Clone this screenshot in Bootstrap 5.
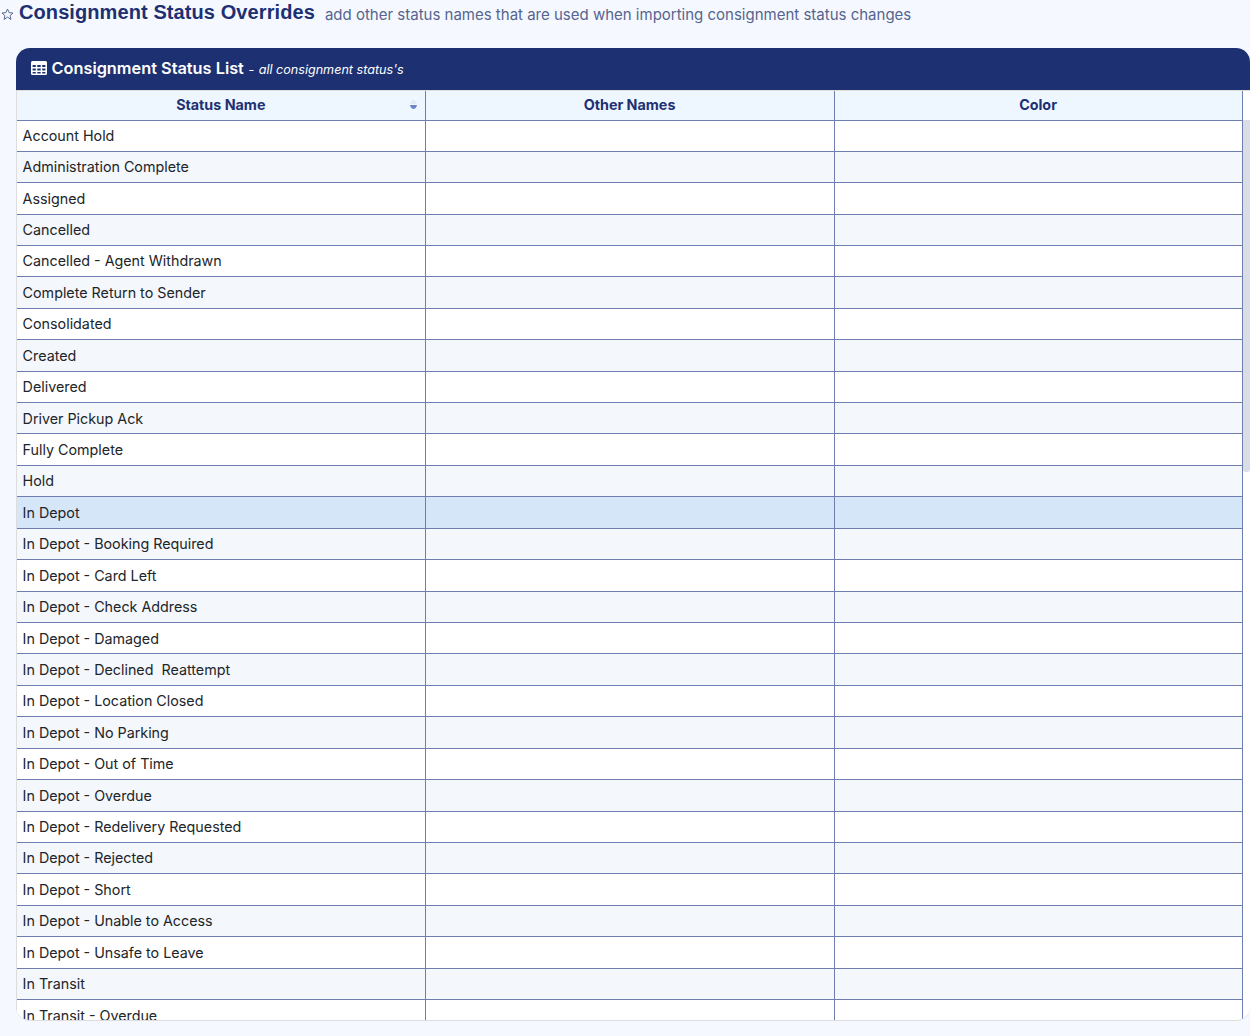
<!DOCTYPE html>
<html lang="en">
<head>
<meta charset="utf-8">
<title>Consignment Status Overrides</title>
<link rel="stylesheet" href="https://cdn.jsdelivr.net/npm/bootstrap@5.3.0/dist/css/bootstrap.min.css">
<style>
html,body{height:100%;overflow:hidden}
body{background:#f5f9ff;font-family:Inter,"Liberation Sans",sans-serif;color:#212529}
.page-head{height:48px;align-items:flex-start;gap:4px;padding-left:1px}
.page-head svg{margin-top:8px;flex:none;margin-right:1px}
.page-title{font:700 20px/24px "Liberation Sans",Arial,sans-serif;color:#1d3072;margin:0;letter-spacing:.09px}
.page-sub{font-size:15px;line-height:30px;color:#56648f;margin-left:6px}
.panel{margin-left:16px;height:973px;position:relative;border-radius:14px;overflow:hidden;background:#fff;border-bottom:1px solid #ddd}
.panel-head{height:43px;background:#1d3072;color:#fff;padding-left:15px;padding-bottom:2px;gap:4.5px;border-bottom:1px solid #ddd}
.panel-head b{font-weight:600;font-size:16.32px}
.panel-head em{font-size:12.6px}
.panel-dash{font-size:12.6px}
.tbl-wrap{height:930px;overflow:hidden;width:1227px;border-left:1px solid #ddd}
.st-table{table-layout:fixed;border-collapse:collapse;width:1226px;margin:0;font-size:14.3px}
.st-table th,.st-table td{border:0 solid #6f7db0;border-right-width:1px;border-bottom-width:1px;padding:0 6px 0 5.6px;height:31.425px;vertical-align:middle;box-shadow:none;background:transparent;color:#212529}
.st-table th{height:29px;background:#eef6ff;color:#1d3072;font-weight:700;text-align:center;position:relative;padding-bottom:2px}
.st-table tbody tr:first-child td{height:31.2px}
.st-table tr.even td{background:#f4f7fc}
.st-table tr.sel td{background:#d6e6f9}
.sorter{position:absolute;right:8px;top:9px;width:7px;height:9px}
.thumb{position:absolute;right:0;top:72px;width:7px;height:352px;background:#d8dde6;border-radius:0 0 3px 3px}
</style>
</head>
<body>
<div class="d-flex page-head">
<svg width="13" height="13" viewBox="0 0 16 16" fill="none" stroke="#56648f" stroke-width="1.2"><path d="M8 1.300l2 4.400 4.800.5-3.600 3.200 1 4.700L8 11.200l-4.200 2.900 1-4.700L1.200 6.200 6 5.700z"/></svg>
<h1 class="page-title">Consignment Status Overrides</h1>
<span class="page-sub">add other status names that are used when importing consignment status changes</span>
</div>
<div class="panel">
<div class="panel-head d-flex align-items-center">
<svg width="16" height="14" viewBox="0 0 16 14" fill="#fff"><path fill-rule="evenodd" d="M1.500 0h13A1.500 1.500 0 0 1 16 1.500v11a1.500 1.500 0 0 1-1.500 1.500h-13A1.500 1.500 0 0 1 0 12.500v-11A1.500 1.500 0 0 1 1.500 0zM1.600 4v2h3.200V4zm4.700 0v2h3.400V4zm4.900 0v2h3.200V4zM1.600 7.500v2h3.200v-2zm4.700 0v2h3.400v-2zm4.900 0v2h3.200v-2zM1.600 11v1.500h3.200V11zm4.700 0v1.500h3.400V11zm4.900 0v1.500h3.200V11z"/></svg>
<span><b>Consignment Status List</b> <span class="panel-dash">-</span> <em>all consignment status's</em></span>
</div>
<div class="tbl-wrap">
<table class="table st-table">
<thead><tr><th>Status Name<svg class="sorter" viewBox="0 0 7 9"><path d="M0 4C1 1.500 2.500 0 3.500 0S6 1.500 7 4z" fill="#e3e8f2"/><path d="M0 5h7C6.500 7.500 5 9 3.500 9S.5 7.500 0 5z" fill="#6a86c4"/></svg></th><th>Other Names</th><th>Color</th></tr></thead>
<tbody>
<tr><td>Account Hold</td><td></td><td></td></tr>
<tr class="even"><td>Administration Complete</td><td></td><td></td></tr>
<tr><td>Assigned</td><td></td><td></td></tr>
<tr class="even"><td>Cancelled</td><td></td><td></td></tr>
<tr><td>Cancelled - Agent Withdrawn</td><td></td><td></td></tr>
<tr class="even"><td>Complete Return to Sender</td><td></td><td></td></tr>
<tr><td>Consolidated</td><td></td><td></td></tr>
<tr class="even"><td>Created</td><td></td><td></td></tr>
<tr><td>Delivered</td><td></td><td></td></tr>
<tr class="even"><td>Driver Pickup Ack</td><td></td><td></td></tr>
<tr><td>Fully Complete</td><td></td><td></td></tr>
<tr class="even"><td>Hold</td><td></td><td></td></tr>
<tr class="sel"><td>In Depot</td><td></td><td></td></tr>
<tr class="even"><td>In Depot - Booking Required</td><td></td><td></td></tr>
<tr><td>In Depot - Card Left</td><td></td><td></td></tr>
<tr class="even"><td>In Depot - Check Address</td><td></td><td></td></tr>
<tr><td>In Depot - Damaged</td><td></td><td></td></tr>
<tr class="even"><td>In Depot - Declined&nbsp; Reattempt</td><td></td><td></td></tr>
<tr><td>In Depot - Location Closed</td><td></td><td></td></tr>
<tr class="even"><td>In Depot - No Parking</td><td></td><td></td></tr>
<tr><td>In Depot - Out of Time</td><td></td><td></td></tr>
<tr class="even"><td>In Depot - Overdue</td><td></td><td></td></tr>
<tr><td>In Depot - Redelivery Requested</td><td></td><td></td></tr>
<tr class="even"><td>In Depot - Rejected</td><td></td><td></td></tr>
<tr><td>In Depot - Short</td><td></td><td></td></tr>
<tr class="even"><td>In Depot - Unable to Access</td><td></td><td></td></tr>
<tr><td>In Depot - Unsafe to Leave</td><td></td><td></td></tr>
<tr class="even"><td>In Transit</td><td></td><td></td></tr>
<tr><td>In Transit - Overdue</td><td></td><td></td></tr>
</tbody>
</table>
</div>
<div class="thumb"></div>
</div>
<script src="https://cdn.jsdelivr.net/npm/bootstrap@5.3.0/dist/js/bootstrap.bundle.min.js"></script>
</body>
</html>
